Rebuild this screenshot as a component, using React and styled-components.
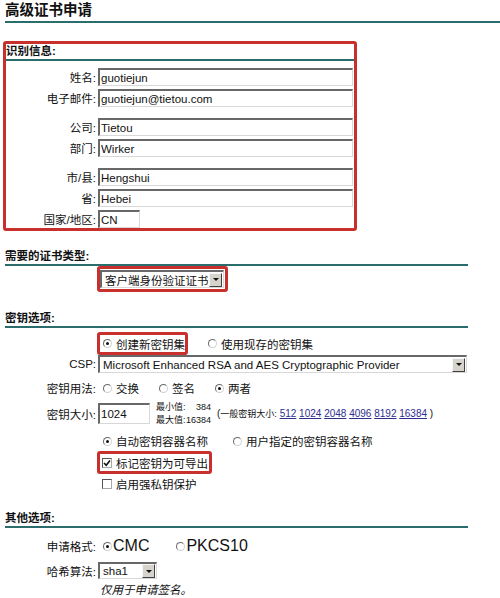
import React from 'react'
import styled, { createGlobalStyle } from 'styled-components'

const TEAL = '#2b6d6d'
const RED = '#c8302e'

const GlobalStyle = createGlobalStyle`
  html, body {
    margin: 0;
    padding: 0;
    background: #fff;
  }
  body {
    font-family: "Liberation Sans", "Noto Sans CJK SC", sans-serif;
    font-size: 11.5px;
    color: #111;
  }
`

const Page = styled.div`
  width: 500px;
  height: 598px;
  overflow: hidden;
  padding-left: 3px;
  box-sizing: border-box;
`

const Title = styled.h1`
  margin: 0 0 0 2px;
  font-size: 14.5px;
  font-weight: bold;
  line-height: 21px;
  border-bottom: 2px solid ${TEAL};
`

const IdentityBox = styled.section`
  width: 348px;
  margin-top: 18px;
  border: 3px solid ${RED};
  border-radius: 3px;
`

const Section = styled.section`
  width: 463px;
  margin: ${p => p.$mt}px 0 0 2px;
`

const SectionHead = styled.h2`
  margin: 0;
  font-size: 11.5px;
  font-weight: bold;
  line-height: 15px;
  border-bottom: 2px solid ${TEAL};
`

const Row = styled.div`
  display: flex;
  align-items: center;
  height: ${p => p.$h}px;
  margin-top: ${p => p.$mt || 0}px;
`

const Label = styled.span`
  flex: none;
  width: ${p => p.$w}px;
  margin-right: 2px;
  text-align: right;
  white-space: nowrap;
`

const TextInput = styled.input`
  box-sizing: border-box;
  flex: ${p => (p.$w ? 'none' : 1)};
  width: ${p => (p.$w ? `${p.$w}px` : 'auto')};
  min-width: 0;
  height: ${p => p.$h || 18}px;
  margin: 0 1px 0 0;
  padding: 0 0 0 1px;
  font: inherit;
  color: #111;
  background: #fff;
  border-style: solid;
  border-width: 2px 1px 1px 2px;
  border-color: #686868 #d8d8d8 #d8d8d8 #686868;
  outline: none;
`

const SelectBox = styled.div`
  box-sizing: border-box;
  display: flex;
  align-items: center;
  width: ${p => p.$w}px;
  height: ${p => p.$h || 18}px;
  padding: 0 1px 0 3px;
  background: #fff;
  border-style: solid;
  border-width: 2px 1px 1px 2px;
  border-color: #686868 #d8d8d8 #d8d8d8 #686868;
`

const SelectText = styled.span`
  flex: 1;
  white-space: nowrap;
  overflow: hidden;
`

const DropButton = styled.span`
  box-sizing: border-box;
  flex: none;
  display: flex;
  align-items: center;
  justify-content: center;
  width: 13px;
  height: 14px;
  background: #d6d3cc;
  border: 1px solid;
  border-color: #f6f6f6 #404040 #404040 #f6f6f6;

  &::after {
    content: '';
    border-left: 3px solid transparent;
    border-right: 3px solid transparent;
    border-top: 3px solid #111;
  }
`

// red marker around a picked control
const Frame = styled.div`
  box-sizing: border-box;
  display: inline-flex;
  align-items: center;
  height: ${p => p.$h}px;
  margin-left: -1px;
  padding: ${p => p.$pad};
  border: 3px solid ${RED};
  border-radius: 3px;
`

const Options = styled.div`
  display: flex;
  align-items: center;
  gap: ${p => p.$gap || 0}px;
  padding-left: ${p => p.$pl ?? 5}px;
`

const Choice = styled.span`
  display: inline-flex;
  align-items: center;
  gap: ${p => (p.$big ? 1 : 4)}px;
  font-size: ${p => (p.$big ? 16 : 11.5)}px;
  white-space: nowrap;
`

const RadioMark = styled.span`
  box-sizing: border-box;
  flex: none;
  display: flex;
  align-items: center;
  justify-content: center;
  width: 9px;
  height: 9px;
  border-radius: 50%;
  border: 1px solid;
  border-color: #6a6a6a #d0d0d0 #d0d0d0 #6a6a6a;
  background: #fff;

  &::after {
    content: '';
    display: ${p => (p.$on ? 'block' : 'none')};
    width: 3px;
    height: 3px;
    border-radius: 50%;
    background: #111;
  }
`

const BoxMark = styled.span`
  box-sizing: border-box;
  flex: none;
  display: flex;
  width: 10px;
  height: 10px;
  border: 1px solid;
  border-color: #555 #a8a8a8 #a8a8a8 #555;
  background: #fff;
`

const Limits = styled.span`
  display: grid;
  grid-template-columns: auto 1fr;
  width: 55px;
  margin-left: 5px;
  font-size: 9px;
  line-height: 13px;

  & > :nth-child(even) {
    justify-self: end;
  }
`

const Hint = styled.span`
  margin-left: 6px;
  font-size: 10px;
  white-space: nowrap;
`

const HintCjk = styled.span`
  font-size: 9px;
`

const SizeLink = styled.a`
  color: #2e2e8f;
  text-decoration: underline;
`

const Note = styled.span`
  padding-left: 2px;
  font-style: italic;
  line-height: 14px;
`

const Radio = ({ on, big, children }) => (
  <Choice $big={big}>
    <RadioMark $on={on} />
    {children}
  </Choice>
)

const Checkbox = ({ on, children }) => (
  <Choice>
    <BoxMark>
      {on && (
        <svg width="8" height="8" viewBox="0 0 8 8">
          <path d="M1 4 L3.2 6.3 L7 1.5" fill="none" stroke="#111" strokeWidth="1.6" />
        </svg>
      )}
    </BoxMark>
    {children}
  </Choice>
)

const Select = ({ w, h, children }) => (
  <SelectBox $w={w} $h={h}>
    <SelectText>{children}</SelectText>
    <DropButton />
  </SelectBox>
)

const identityFields = [
  { label: '姓名:', value: 'guotiejun', mt: 7 },
  { label: '电子邮件:', value: 'guotiejun@tietou.com', mt: 3 },
  { label: '公司:', value: 'Tietou', mt: 11 },
  { label: '部门:', value: 'Wirker', mt: 3 },
  { label: '市/县:', value: 'Hengshui', mt: 11 },
  { label: '省:', value: 'Hebei', mt: 3 },
  { label: '国家/地区:', value: 'CN', mt: 3, w: 42 },
]

const keySizes = ['512', '1024', '2048', '4096', '8192', '16384']

export default function App() {
  return (
    <Page>
      <GlobalStyle />
      <Title>高级证书申请</Title>

      <IdentityBox>
        <SectionHead>识别信息:</SectionHead>
        {identityFields.map(f => (
          <Row key={f.label} $h={18} $mt={f.mt}>
            <Label $w={90}>{f.label}</Label>
            <TextInput defaultValue={f.value} $w={f.w} />
          </Row>
        ))}
      </IdentityBox>

      <Section $mt={18}>
        <SectionHead>需要的证书类型:</SectionHead>
        <Row $h={26}>
          <Label $w={91} />
          <Frame $h={26} $pad="0 1px 0 0">
            <Select w={124}>客户端身份验证证书</Select>
          </Frame>
        </Row>
      </Section>

      <Section $mt={19}>
        <SectionHead>密钥选项:</SectionHead>
        <Row $h={23} $mt={4}>
          <Label $w={91} />
          <Options $pl={0} $gap={20}>
            <Frame $h={23} $pad="0 0 0 3px">
              <Radio on>创建新密钥集</Radio>
            </Frame>
            <Radio>使用现存的密钥集</Radio>
          </Options>
        </Row>
        <Row $h={18}>
          <Label $w={91}>CSP:</Label>
          <Select w={369}>Microsoft Enhanced RSA and AES Cryptographic Provider</Select>
        </Row>
        <Row $h={22} $mt={4}>
          <Label $w={91}>密钥用法:</Label>
          <Options $gap={20}>
            <Radio>交换</Radio>
            <Radio>签名</Radio>
            <Radio on>两者</Radio>
          </Options>
        </Row>
        <Row $h={21} $mt={4}>
          <Label $w={91}>密钥大小:</Label>
          <TextInput defaultValue="1024" $w={52} $h={21} />
          <Limits>
            <span>最小值:</span>
            <span>384</span>
            <span>最大值:</span>
            <span>16384</span>
          </Limits>
          <Hint>
            (<HintCjk>一般密钥大小:</HintCjk>{' '}
            {keySizes.map(s => (
              <React.Fragment key={s}>
                <SizeLink href="#">{s}</SizeLink>{' '}
              </React.Fragment>
            ))}
            )
          </Hint>
        </Row>
        <Row $h={20} $mt={7}>
          <Label $w={91} />
          <Options $gap={25}>
            <Radio on>自动密钥容器名称</Radio>
            <Radio>用户指定的密钥容器名称</Radio>
          </Options>
        </Row>
        <Row $h={23}>
          <Label $w={91} />
          <Frame $h={23} $pad="0 1px 0 2px">
            <Checkbox on>标记密钥为可导出</Checkbox>
          </Frame>
        </Row>
        <Row $h={19}>
          <Label $w={91} />
          <Options $pl={4}>
            <Checkbox>启用强私钥保护</Checkbox>
          </Options>
        </Row>
      </Section>

      <Section $mt={18}>
        <SectionHead>其他选项:</SectionHead>
        <Row $h={20} $mt={8}>
          <Label $w={91}>申请格式:</Label>
          <Options $gap={27}>
            <Radio on big>CMC</Radio>
            <Radio big>PKCS10</Radio>
          </Options>
        </Row>
        <Row $h={17} $mt={6}>
          <Label $w={91}>哈希算法:</Label>
          <Select w={59} h={17}>sha1</Select>
        </Row>
        <Row $h={14} $mt={4}>
          <Label $w={91} />
          <Note>仅用于申请签名。</Note>
        </Row>
      </Section>
    </Page>
  )
}
